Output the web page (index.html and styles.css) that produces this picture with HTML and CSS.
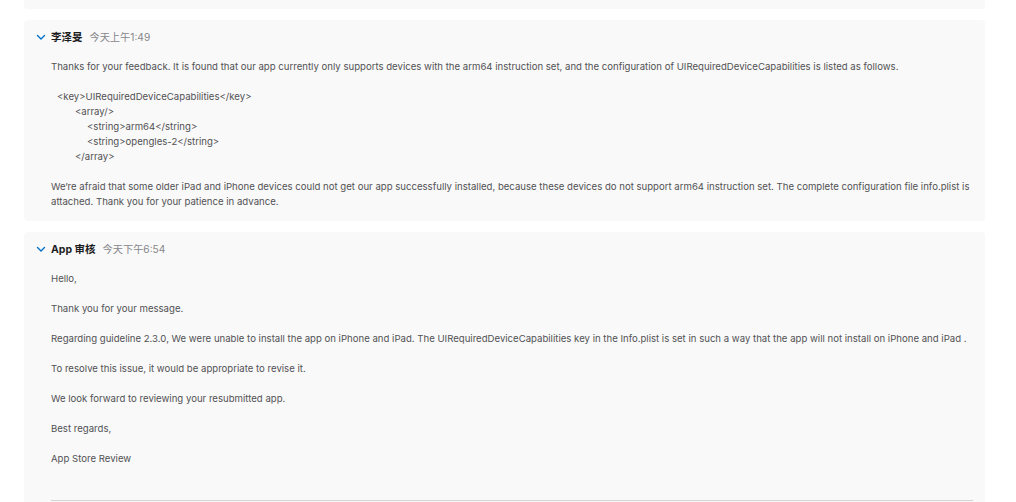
FILE: index.html
```html
<!DOCTYPE html>
<html lang="zh">
<head>
<meta charset="utf-8">
<title>Messages</title>
<link rel="stylesheet" href="styles.css">
</head>
<body>
<div class="thread">
  <div class="card card-stub"></div>

  <div class="card">
    <div class="msg-head">
      <svg class="chev" width="10" height="10" viewBox="0 0 10 10"><path d="M1.5 3.4 L5 6.9 L8.5 3.4" fill="none" stroke="#0070c9" stroke-width="1.4" stroke-linecap="round" stroke-linejoin="round"/></svg>
      <span class="author">李泽旻</span>
      <span class="time">今天上午1:49</span>
    </div>
    <div class="msg-body">
      <p>Thanks for your feedback. It is found that our app currently only supports devices with the arm64 instruction set, and the configuration of UIRequiredDeviceCapabilities is listed as follows.</p>
      <div class="code">
        <div class="l1">&lt;key&gt;UIRequiredDeviceCapabilities&lt;/key&gt;</div>
        <div class="l2">&lt;array/&gt;</div>
        <div class="l3">&lt;string&gt;arm64&lt;/string&gt;</div>
        <div class="l3">&lt;string&gt;opengles-2&lt;/string&gt;</div>
        <div class="l2">&lt;/array&gt;</div>
      </div>
      <p>We’re afraid that some older iPad and iPhone devices could not get our app successfully installed, because these devices do not support arm64 instruction set. The complete configuration file info.plist is attached. Thank you for your patience in advance.</p>
    </div>
  </div>

  <div class="card card-last">
    <div class="msg-head">
      <svg class="chev" width="10" height="10" viewBox="0 0 10 10"><path d="M1.5 3.4 L5 6.9 L8.5 3.4" fill="none" stroke="#0070c9" stroke-width="1.4" stroke-linecap="round" stroke-linejoin="round"/></svg>
      <span class="author">App 审核</span>
      <span class="time">今天下午6:54</span>
    </div>
    <div class="msg-body">
      <p>Hello,</p>
      <p>Thank you for your message.</p>
      <p>Regarding guideline 2.3.0, We were unable to install the app on iPhone and iPad. The UIRequiredDeviceCapabilities key in the Info.plist is set in such a way that the app will not install on iPhone and iPad .</p>
      <p>To resolve this issue, it would be appropriate to revise it.</p>
      <p>We look forward to reviewing your resubmitted app.</p>
      <p>Best regards,</p>
      <p>App Store Review</p>
      <hr class="divider">
    </div>
  </div>
</div>
</body>
</html>
```

FILE: styles.css
```css
html, body {
  margin: 0;
  padding: 0;
  background: #ffffff;
}
body {
  font-family: Inter, "Noto Sans CJK SC", "Noto Sans", sans-serif;
  font-size: 9.6px;
  line-height: 15px;
  color: #515154;
  overflow: hidden;
}
.thread {
  display: flex;
  flex-direction: column;
  gap: 11px;
  padding: 0 31px 0 24px;
}
.card {
  background: #f9f9f9;
  border-radius: 4px;
  padding: 7px 12px 12px 12px;
}
.card-stub {
  height: 9px;
  padding: 0;
  border-radius: 0 0 4px 4px;
}
.card-last {
  padding-bottom: 40px;
}
.msg-head {
  display: flex;
  align-items: center;
  height: 20px;
}
.chev {
  flex: none;
  margin-right: 5px;
}
.author {
  font-weight: 700;
  font-size: 10.5px;
  color: #1d1d1f;
  margin-right: 7px;
}
.time {
  font-size: 10.2px;
  color: #86868b;
}
.msg-body {
  padding-left: 15px;
  margin-top: 12px;
}
.msg-body p {
  margin: 0 0 15px 0;
}
.msg-body p:last-of-type {
  margin-bottom: 0;
}
.code {
  margin: 0 0 15px 0;
}
.l1 { padding-left: 6px; }
.l2 { padding-left: 24px; }
.l3 { padding-left: 36px; }
.divider {
  border: 0;
  border-top: 1px solid #d2d2d7;
  margin: 34px 0 0 0;
}
```
